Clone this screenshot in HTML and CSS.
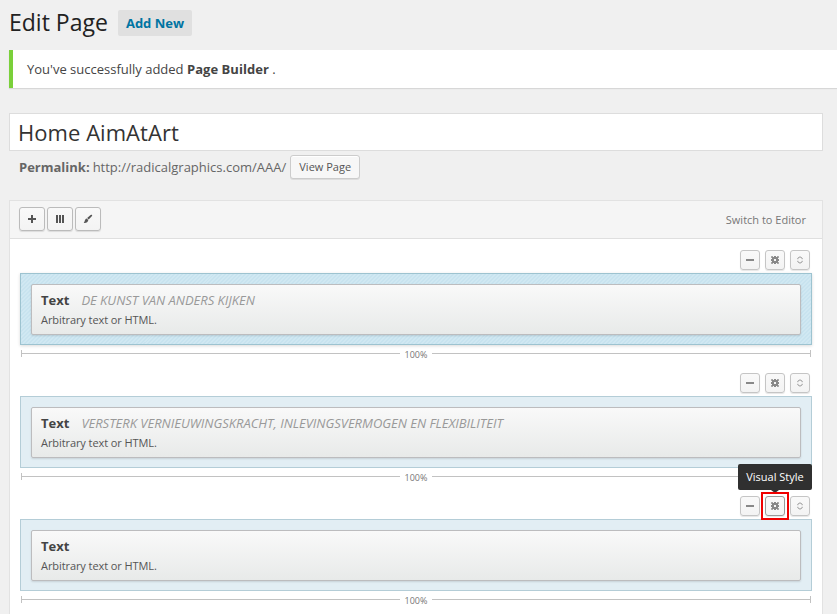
FILE: index.html
```html
<!DOCTYPE html>
<html lang="en">
<head>
<meta charset="utf-8">
<title>Edit Page</title>
<link rel="stylesheet" href="styles.css">
</head>
<body>
<svg class="defs" width="0" height="0">
  <symbol id="minus" viewBox="0 0 18 18"><path d="M5 8h8v2H5z"/></symbol>
  <symbol id="gear" viewBox="0 0 18 18"><path fill-rule="evenodd" d="M6 6h6v6H6zM8 8v2h2V8z"/><path d="M8 5h2v1H8zM8 12h2v1H8zM5 8h1v2H5zM12 8h1v2h-1z"/><path opacity=".75" d="M5.500 5H7v1H6v1H5V5.500zM11 5h1.500l.5.500V7h-1V6h-1zM5 11h1v1h1v1H5.500l-.5-.5zM12 11h1v1.500l-.5.500H11v-1h1z"/></symbol>
  <symbol id="sort" viewBox="0 0 18 18"><path d="M6.800 8.200V7.200L9 5.800l2.200 1.400v1M6.800 9.800v1L9 12.200l2.200-1.400v-1" fill="none" stroke="#999" stroke-width="1"/></symbol>
</svg>
<header class="page-head"><h1>Edit Page</h1><a class="add-new">Add New</a></header>
<div class="notice">You've successfully added <b>Page Builder</b> .</div>
<main>
  <div class="title-field">Home AimAtArt</div>
  <div class="permalink"><b>Permalink:</b><span>http://radicalgraphics.com/AAA/</span><a class="view">View Page</a></div>
  <section class="builder">
    <div class="toolbar">
      <button class="tool"><svg viewBox="0 0 24 22"><path d="M11 7h2v3h3v2h-3v3h-2v-3H8v-2h3z"/></svg></button>
      <button class="tool"><svg viewBox="0 0 24 22"><path d="M8 7h2v8H8zM11 7h2v8h-2zM14 7h2v8h-2z"/></svg></button>
      <button class="tool"><svg viewBox="0 0 24 22"><path d="M15.800 6.800q.7.500.2 1.200l-3.300 3.500-1.600-1.500 3.500-2.900q.7-.6 1.200-.3zM10.600 10.500l1.700 1.600c-.3 2.300-2.300 3.200-4.600 2.800 1.200-.8.900-3.800 2.900-4.400z"/></svg></button>
      <a class="switch">Switch to Editor</a>
    </div>
    <div class="rows">
      <article class="row active">
        <div class="controls"><button><svg><use href="#minus"/></svg></button><button><svg><use href="#gear"/></svg></button><button><svg><use href="#sort"/></svg></button></div>
        <div class="cell"><div class="widget"><h2>Text<em>DE KUNST VAN ANDERS KIJKEN</em></h2><p>Arbitrary text or HTML.</p></div></div>
        <div class="scale"><span>100%</span></div>
      </article>
      <article class="row">
        <div class="controls"><button><svg><use href="#minus"/></svg></button><button><svg><use href="#gear"/></svg></button><button><svg><use href="#sort"/></svg></button></div>
        <div class="cell"><div class="widget"><h2>Text<em>VERSTERK VERNIEUWINGSKRACHT, INLEVINGSVERMOGEN EN FLEXIBILITEIT</em></h2><p>Arbitrary text or HTML.</p></div></div>
        <div class="scale"><span>100%</span></div>
      </article>
      <article class="row">
        <div class="controls"><button><svg><use href="#minus"/></svg></button><button class="marked"><svg><use href="#gear"/></svg><span class="tooltip">Visual Style</span></button><button><svg><use href="#sort"/></svg></button></div>
        <div class="cell"><div class="widget"><h2>Text</h2><p>Arbitrary text or HTML.</p></div></div>
        <div class="scale"><span>100%</span></div>
      </article>
    </div>
  </section>
</main>
</body>
</html>
```
FILE: styles.css
```css
* { box-sizing: border-box; }
html, body { height: 100%; overflow: hidden; }
body {
  margin: 0;
  padding-left: 9px;
  background: #f0f0f0;
  color: #444;
  font: 13px/20px "Open Sans", sans-serif;
}
h1, h2, p { margin: 0; }
.defs { position: absolute; }
.page-head { display: flex; align-items: flex-start; height: 50px; }
h1 { width: 109px; padding-top: 7px; font-size: 23px; line-height: 30px; font-weight: 400; color: #222; white-space: nowrap; }
.add-new { width: 74px; margin-top: 10px; text-align: center; height: 26px; line-height: 26px; font-weight: 700; color: #0074a2; background: #e0e0e0; border-radius: 2px; white-space: nowrap; }
.notice { height: 38px; padding-left: 14px; line-height: 38px; background: #fff; border-left: 4px solid #7ad03a; box-shadow: 0 1px 1px rgba(0,0,0,.1); }
.notice b { font-weight: 700; letter-spacing: .04px; }
main { width: 814px; padding-top: 25px; }
.title-field { height: 38px; padding-left: 8px; border: 1px solid #ddd; background: #fff; color: #333; font-size: 22px; line-height: 37px; letter-spacing: .05px; }
.permalink { display: flex; align-items: center; height: 49px; padding: 0 0 17px 10px; color: #666; }
.permalink b { margin-right: 3px; }
.view { width: 70px; margin-left: 4px; height: 24px; text-align: center; border: 1px solid #ccc; border-radius: 3px; background: #f7f7f7; box-shadow: inset 0 1px #fff, 0 1px rgba(0,0,0,.08); font-size: 11px; line-height: 22px; color: #555; }
.builder { height: 440px; border: 1px solid #e2e2e2; background: #fff; }
.toolbar { display: flex; align-items: center; gap: 2px; height: 38px; padding: 0 16px 1px 9px; background: #f5f5f5; border-bottom: 1px solid #dfdfdf; }
button { padding: 0; border: 1px solid #c5c5c5; border-radius: 3px; background: linear-gradient(#f9f9f9, #f3f3f3); box-shadow: 0 1px 1px rgba(0,0,0,.1); font: inherit; }
.tool { width: 26px; height: 24px; border-color: #bbb; }
button svg { display: block; width: 100%; height: 100%; fill: #888; }
.tool svg { fill: #555; }
.switch { margin-left: auto; padding-top: 2px; font-size: 11px; color: #777; }
.rows { padding: 11px 10px 0; }
.row { height: 123px; }
.controls { display: flex; justify-content: flex-end; gap: 5px; padding-right: 2px; margin-bottom: 3px; }
.controls button { width: 20px; height: 20px; }
.cell { height: 72px; padding: 10px; border: 1px solid #b4cdd7; background: #e2eef4; }
.active .cell { border-color: #9dc3d0; background: repeating-linear-gradient(-45deg, #c8e3ef 0 1.410px, #d0e8f2 1.410px 2.820px); box-shadow: 0 1px 3px rgba(0,0,0,.15); }
.widget { height: 51px; padding: 5px 9px; border: 1px solid #bcbcbe; border-radius: 2px; background: linear-gradient(#f9f9f9, #e8eae9); box-shadow: 0 1px 2px rgba(0,0,0,.12); }
h2 { height: 19px; font-size: 13px; font-weight: 700; line-height: 20px; white-space: nowrap; }
h2 em { margin-left: 12px; font-weight: 400; color: #999; letter-spacing: -.02px; }
.widget p { font-size: 11px; line-height: 21px; color: #555; letter-spacing: -.08px; }
.scale { display: flex; align-items: center; justify-content: center; height: 7px; margin: 5px 1px 0; border: solid #c2c2c2; border-width: 0 1px; background: linear-gradient(#c2c2c2, #c2c2c2) 0 3px / 100% 1px no-repeat; }
.scale span { padding: 0 5px; background: #fff; font-size: 9px; line-height: 10px; color: #777; margin-top: 2px; }
.controls .marked { position: relative; border-color: #999; }
.marked::after { content: ""; position: absolute; inset: -5px; border: 2px solid #f00000; }
.tooltip { position: absolute; right: -28px; bottom: 25px; width: 74px; height: 26px; border-radius: 2px; background: #303030; color: #fff; font-size: 11px; line-height: 26px; text-align: center; white-space: nowrap; }
.tooltip::after { content: ""; position: absolute; left: 33px; top: 26px; border: 4px solid transparent; border-top: 3px solid #303030; border-bottom: 0; }
```
